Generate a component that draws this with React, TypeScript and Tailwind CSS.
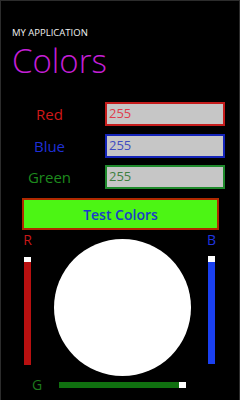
import React from "react";

const rows = [
  { name: "Red", label: "text-[#d01818]", border: "border-[#c41c1c]", text: "text-[#e03c4c]" },
  { name: "Blue", label: "text-[#1f2fd6]", border: "border-[#1424b8]", text: "text-[#3f4cc0]" },
  { name: "Green", label: "text-[#1d8a1d]", border: "border-[#1f8a2c]", text: "text-[#3f8040]" },
];

export default function App() {
  return (
    <div
      className="w-[240px] h-[400px] bg-black overflow-hidden border-t border-x border-[#2c2c2c] flex flex-col"
      style={{ fontFamily: '"Open Sans", "Noto Sans", sans-serif' }}
    >
      {/* title panel */}
      <div className="pl-[11px] pt-[26px]">
        <div className="text-[9.5px] leading-[12px] font-normal text-[#f0f0f0]">MY APPLICATION</div>
        <div className="mt-[4px] text-[33px] leading-[36px] font-[350] text-[#c41fd6]">Colors</div>
      </div>

      {/* value fields */}
      <div className="mt-[23px] flex flex-col gap-[7.5px]">
        {rows.map((r) => (
          <div key={r.name} className="flex items-center h-[24px]">
            <div className={`w-[97px] text-center text-[15px] leading-[20px] ${r.label}`}>{r.name}</div>
            <div
              className={`ml-[7px] w-[120px] h-[24px] border-2 ${r.border} bg-[#c6c6c6] flex items-center pl-[2px] text-[13px] ${r.text}`}
            >
              255
            </div>
          </div>
        ))}
      </div>

      <div className="mt-[9px] ml-[21px] w-[197px] h-[32px] bg-[#4cf514] border-2 border-[#b02a00] flex items-center justify-center text-[14px] font-semibold text-[#1a3cc8]">
        Test Colors
      </div>

      {/* sliders + preview */}
      <div className="mt-[3px] flex pl-[22px]">
        <div className="w-[9px] flex flex-col items-center">
          <div className="text-[14px] leading-[14px] text-[#c81818]">R</div>
          <div className="mt-[10px] w-[7px] h-[5px] bg-white" />
          <div className="w-[7px] h-[103px] bg-[#b81010]" />
        </div>
        <div className="ml-[22px] mt-[6px] w-[137px] h-[137px] rounded-full bg-white" />
        <div className="ml-[16px] w-[9px] flex flex-col items-center">
          <div className="text-[14px] leading-[14px] text-[#1f35e0]">B</div>
          <div className="mt-[9px] w-[7px] h-[6px] bg-white" />
          <div className="w-[7px] h-[102px] bg-[#1a40f0]" />
        </div>
      </div>

      <div className="mt-[1px] flex items-center pl-[31px] h-[16px]">
        <div className="w-[11px] text-[14px] leading-[14px] text-[#1d7a1d]">G</div>
        <div className="ml-[16px] flex items-center">
          <div className="w-[120px] h-[6px] bg-[#107010]" />
          <div className="w-[7px] h-[6px] bg-white" />
        </div>
      </div>
    </div>
  );
}
